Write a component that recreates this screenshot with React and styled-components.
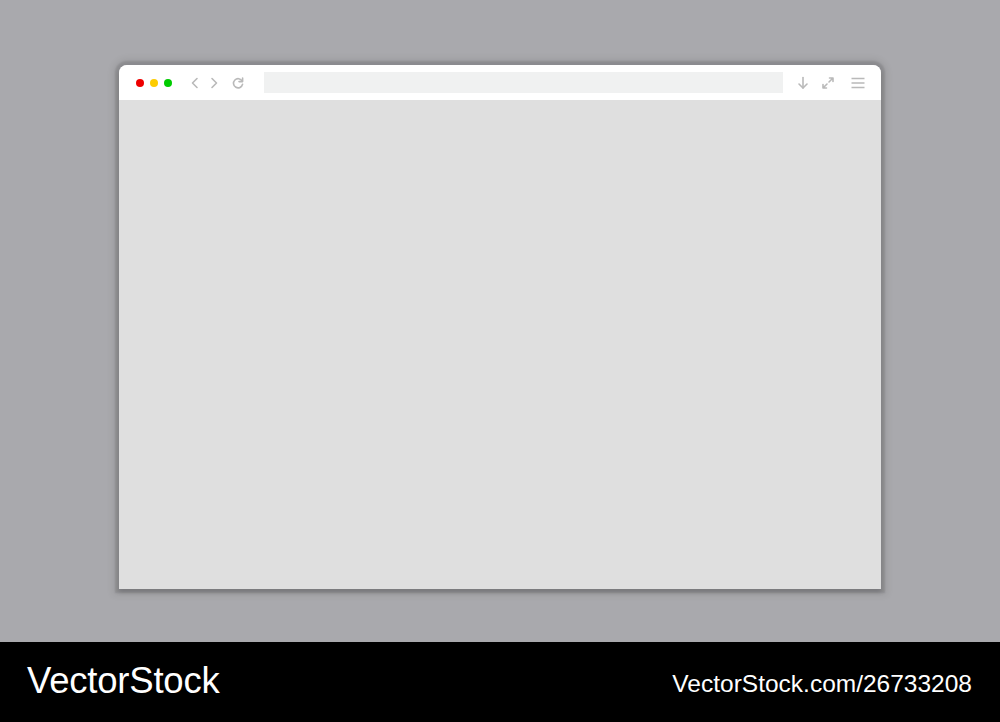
import React from "react"
import styled, { createGlobalStyle } from "styled-components"

const GlobalStyle = createGlobalStyle`
  html, body {
    margin: 0;
    padding: 0;
    background: #a9a9ad;
  }
`

const Page = styled.div`
  width: 1000px;
  height: 722px;
  display: flex;
  flex-direction: column;
  overflow: hidden;
`

const Stage = styled.div`
  height: 642px;
  background: #a9a9ad;
  display: flex;
  justify-content: center;
  align-items: flex-start;
  padding-top: 65px;
  box-sizing: border-box;
`

const Window = styled.div`
  width: 762px;
  height: 524px;
  border-radius: 8px 8px 0 0;
  background: #dfdfdf;
  display: flex;
  flex-direction: column;
  overflow: hidden;
  box-shadow: 0 0 2px 4px rgba(0, 0, 0, 0.12), 0 0 6px 7px rgba(0, 0, 0, 0.06),
    0 4px 4px rgba(0, 0, 0, 0.12);
`

const Toolbar = styled.div`
  height: 35px;
  background: #ffffff;
  display: flex;
  align-items: center;
  padding: 0 13px 0 17px;
  box-sizing: border-box;
`

const Dots = styled.div`
  display: flex;
  gap: 6px;
  margin-right: 16px;
`

const Dot = styled.span`
  width: 8px;
  height: 8px;
  border-radius: 50%;
  background: ${(p) => p.color};
`

const Icon = styled.svg`
  width: 14px;
  height: 14px;
  margin-right: ${(p) => p.gap || 0}px;
  flex-shrink: 0;
`

const Address = styled.div`
  width: 519px;
  height: 21px;
  background: #f0f1f1;
  margin: 0 13px 0 19px;
`

const Content = styled.div`
  flex: 1;
  background: #dfdfdf;
`

const Footer = styled.div`
  height: 80px;
  background: #000000;
  display: flex;
  align-items: center;
  justify-content: space-between;
  padding: 0 28px 0 27px;
  font-family: "Liberation Sans", Arial, sans-serif;
  color: #ffffff;
`

const Brand = styled.div`
  font-size: 36.5px;
  letter-spacing: -0.2px;
  margin-top: -2px;
`

const Link = styled.div`
  font-size: 24.5px;
  margin-top: 4px;
`

const stroke = { fill: "none", stroke: "#b9b9b9", strokeWidth: 1.6, strokeLinecap: "round", strokeLinejoin: "round" }

const App = () => (
  <Page>
    <GlobalStyle />
    <Stage>
      <Window>
        <Toolbar>
          <Dots>
            <Dot color="#ee0000" />
            <Dot color="#fdcc00" />
            <Dot color="#00cc00" />
          </Dots>
          <Icon viewBox="0 0 14 14" gap={5}>
            <path d="M9 2.5 L4.5 7 L9 11.5" {...stroke} />
          </Icon>
          <Icon viewBox="0 0 14 14" gap={10}>
            <path d="M5 2.5 L9.5 7 L5 11.5" {...stroke} />
          </Icon>
          <Icon viewBox="0 0 14 14">
            <path d="M11.2 5.2 A4.6 4.6 0 1 0 11.6 8.2" {...stroke} />
            <path d="M11.6 2 L11.6 5.6 L8 5.6" {...stroke} />
          </Icon>
          <Address />
          <Icon viewBox="0 0 14 14" gap={11}>
            <path d="M7 1.5 L7 12" {...stroke} />
            <path d="M3 8 L7 12 L11 8" {...stroke} />
          </Icon>
          <Icon viewBox="0 0 14 14" gap={16}>
            <path d="M8 6 L12 2 M8.5 2 L12 2 L12 5.5" {...stroke} />
            <path d="M6 8 L2 12 M2 8.5 L2 12 L5.5 12" {...stroke} />
          </Icon>
          <Icon viewBox="0 0 14 14">
            <path d="M0.5 2.5 L13.5 2.5 M0.5 7 L13.5 7 M0.5 11.5 L13.5 11.5" {...stroke} strokeLinecap="butt" />
          </Icon>
        </Toolbar>
        <Content />
      </Window>
    </Stage>
    <Footer>
      <Brand>VectorStock</Brand>
      <Link>VectorStock.com/26733208</Link>
    </Footer>
  </Page>
)

export default App
